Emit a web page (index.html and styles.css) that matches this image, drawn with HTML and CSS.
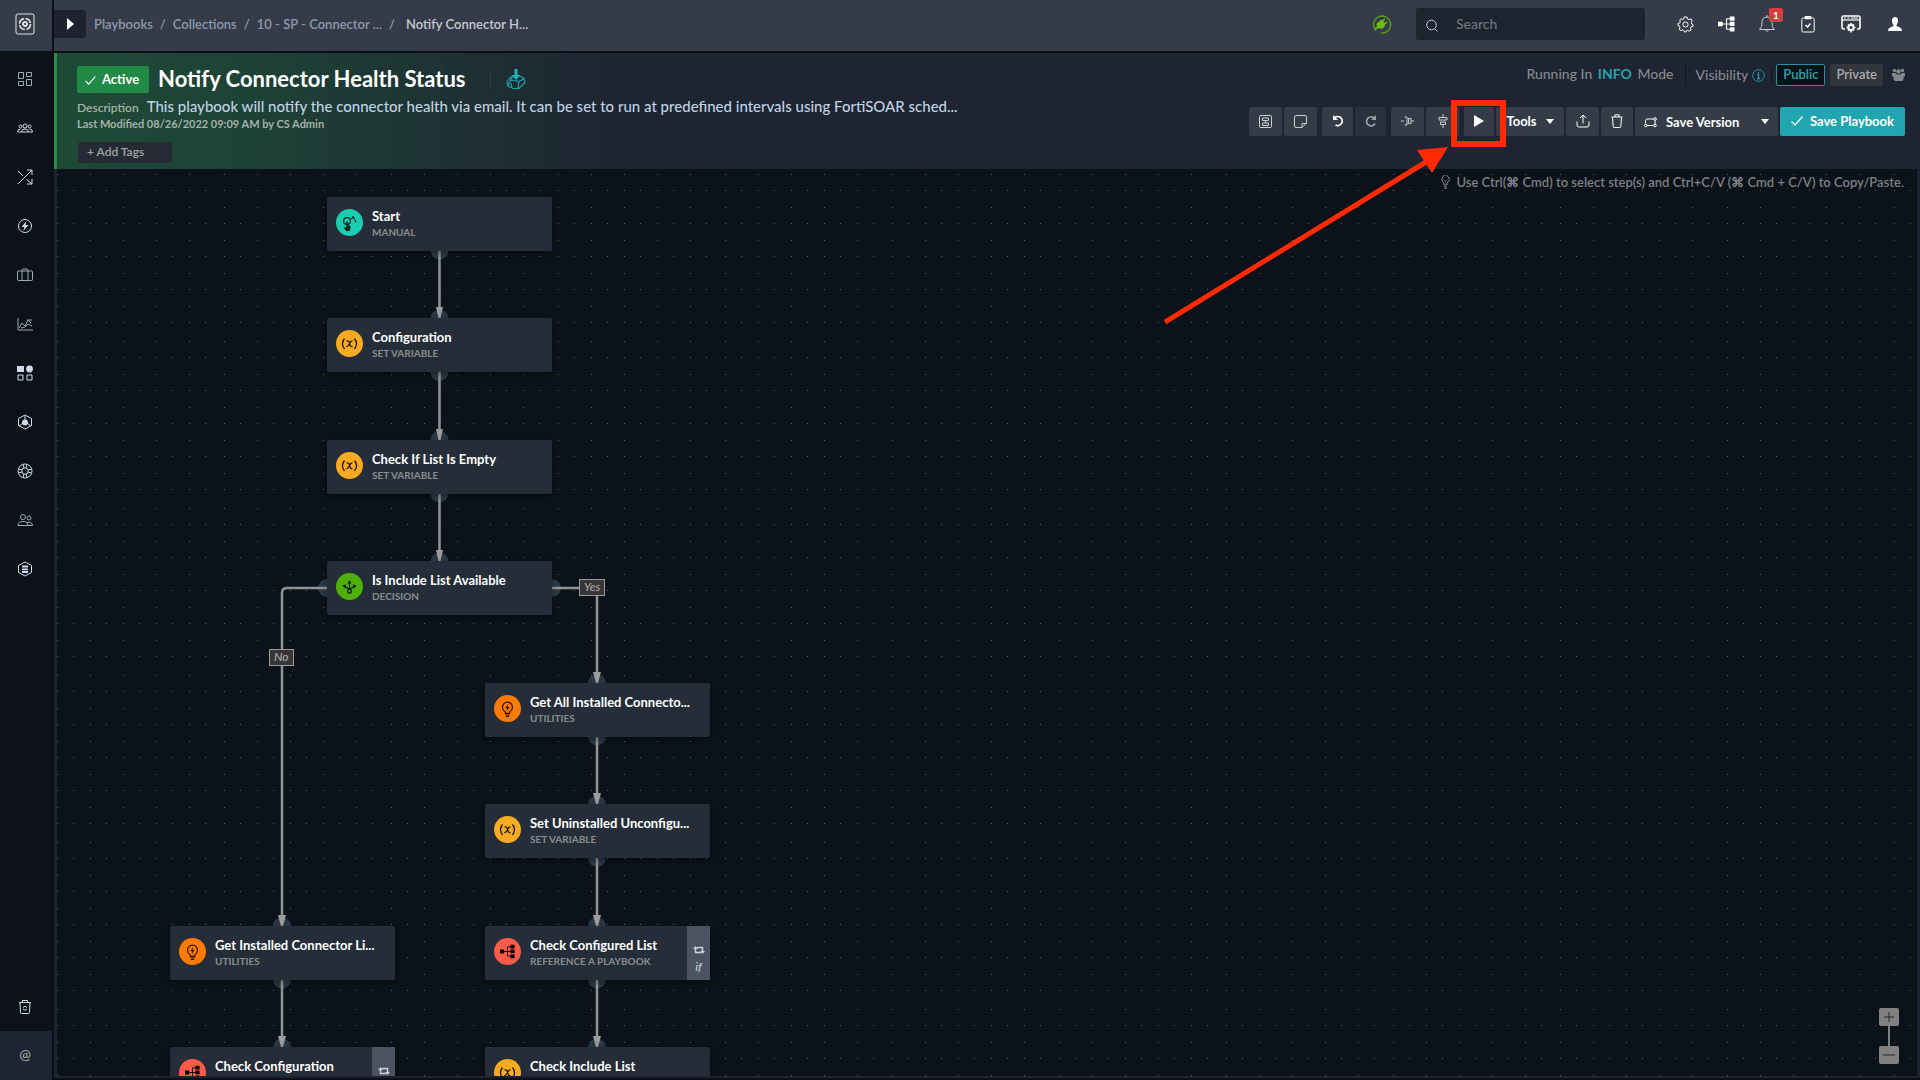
FILE: index.html
```html
<!DOCTYPE html>
<html lang="en">
<head>
<meta charset="utf-8">
<title>Notify Connector Health Status</title>
<link rel="stylesheet" href="styles.css">
</head>
<body>
<svg class="defs" aria-hidden="true">
  <symbol id="i-var" viewBox="0 0 27 27"><path d="M8.500 8.500q-4 5 0 10.500M18.500 8.500q4 5 0 10.500" fill="none" stroke="#1c1608" stroke-width="1.300"/><path d="M10.500 10.800h1.200q1 0 1.400 1.200l1 3.300q.4 1.300 1.400 1.300h1M16.500 10.800q-1.300-.2-2.300 1.500l-1.600 2.700q-1 1.800-2.300 1.600" fill="none" stroke="#1c1608" stroke-width="1.300"/></symbol>
  <symbol id="i-hand" viewBox="0 0 27 27"><circle cx="11" cy="12" r="3.400" fill="none" stroke="#06231d" stroke-width="1.200"/><path d="M10.300 12.500h1.500v3.600l2.700.6v2.600l-1 2.700h-3.300l-2.400-3.200 1-.8 1.500 1z" fill="#06231d"/><path d="M14.500 10.500l2-2M17.500 9l2.500 3.500" stroke="#06231d"/><circle cx="17" cy="8.500" r="1.200" fill="#06231d"/><circle cx="19.500" cy="12.600" r=".8" fill="#06231d"/></symbol>
  <symbol id="i-decision" viewBox="0 0 27 27"><path d="M13.500 9.500v7M9 13.500l4.500 3 4.500-3" fill="none" stroke="#071d00" stroke-width="1.200"/><path d="M11.500 10.500l2-3.500 2 3.500zM10.500 11.500l-4 .8 2.200 3.200zM16.500 11.500l4 .8-2.200 3.200z" fill="#071d00"/><circle cx="13.500" cy="18.300" r="1.900" fill="none" stroke="#071d00" stroke-width="1.200"/></symbol>
  <symbol id="i-bulb" viewBox="0 0 27 27"><path d="M11.300 18.300v-1.300q-2.800-1.900-2.800-4.800a5 5 0 0 1 10 0q0 2.900-2.800 4.800v1.300zM11.300 20h4.400M12 21.500h3" fill="none" stroke="#2a1200" stroke-width="1.200"/><path d="M14.200 9l-2.900 4.300h1.900l-.5 3 2.900-4.300h-1.900z" fill="#2a1200"/></symbol>
  <symbol id="i-tree" viewBox="0 0 18 16"><path d="M0 5.500h5v5H0zM12.500 0h5v4.500h-5zM12.500 5.700h5v4.500h-5zM12.500 11.500h5V16h-5z"/><path d="M5 8h8M9 2.500v11M9 2.500h4M9 13.500h4" fill="none" stroke="currentColor" stroke-width="1.200"/></symbol>
  <symbol id="i-loop" viewBox="0 0 12 10"><path d="M2.500 3v4.500H8M9.500 7V2.500H4" fill="none" stroke="currentColor" stroke-width="1.500"/><path d="M0 4l2.500-3L5 4zM7 6l2.500 3L12 6z" fill="currentColor"/></symbol>
  <symbol id="i-caret" viewBox="0 0 8 5"><path d="M0 0h8L4 5z"/></symbol>
  <symbol id="i-check" viewBox="0 0 12 10"><path d="M.5 5.500L4 9l7.500-8.500" fill="none" stroke="currentColor" stroke-width="1.200"/></symbol>
</svg>

<div class="app">
  <aside class="side">
    <a class="brand" href="#" aria-label="Home"><svg width="20" height="22" viewBox="0 0 20 22" class="line"><rect x="1" y="1" width="18" height="20" rx="2"/><circle cx="10" cy="11" r="5.500" stroke-width="1.600" stroke-dasharray="7 1.600"/><circle cx="10" cy="11" r="2" stroke-width="1.800"/></svg></a>
    <nav class="menu" aria-label="Main">
      <a href="#" aria-label="Dashboard"><svg class="line dim" width="16" height="16" viewBox="0 0 16 16"><path d="M1.500 1.500h5v6h-5zM9.500 1.500h5v4h-5zM1.500 10.500h5v4h-5zM9.500 8.500h5v6h-5z"/></svg></a>
      <a href="#" aria-label="Teams"><svg class="line" width="16" height="16" viewBox="0 0 16 16"><circle cx="8" cy="6" r="2"/><circle cx="3.500" cy="6.500" r="1.500"/><circle cx="12.500" cy="6.500" r="1.500"/><path d="M4.500 12q0-3 3.500-3t3.500 3zM4.500 12h-4q0-3 3-3M11.500 12h4q0-3-3-3"/></svg></a>
      <a href="#" aria-label="Automation"><svg class="line" width="16" height="16" viewBox="0 0 16 16"><path d="M1 15L15 1M10 1h5v5M1 2l5 5M9.500 10.500L15 15M15 10v5h-5"/></svg></a>
      <a href="#" aria-label="Incident response"><svg class="line" width="16" height="16" viewBox="0 0 16 16"><circle cx="8" cy="8" r="6.500"/><path d="M9.500 3L4.500 9h3l-1.200 4L11.500 7h-3z" fill="currentColor" stroke="none"/></svg></a>
      <a href="#" aria-label="Cases"><svg class="line dim" width="16" height="16" viewBox="0 0 16 16"><rect x=".5" y="4" width="15" height="9.500" rx="1"/><path d="M5 13.500V4q0-2 1-2h4q1 0 1 2v9.500"/></svg></a>
      <a href="#" aria-label="Reports"><svg class="line dim" width="16" height="16" viewBox="0 0 16 16"><path d="M1 2v12h15M2 12l3-5 3 3 3-6 3 3M4 12l4-1 3-3 4 2M10 4h5"/></svg></a>
      <a href="#" aria-label="Content hub"><svg class="line" width="16" height="16" viewBox="0 0 16 16"><path d="M0 1h7v6H0z" fill="currentColor" stroke="none"/><circle cx="12.500" cy="4" r="3.400" fill="currentColor" stroke="none"/><path d="M1 10h5v5H1zM10 10h5v5h-5z"/></svg></a>
      <a href="#" aria-label="Assets"><svg class="line" width="16" height="16" viewBox="0 0 16 16"><path d="M8 1l6.500 3.500v7L8 15l-6.500-3.500v-7zM8 2v6M2 12l4-3M14 12l-4-3"/><circle cx="8" cy="8.500" r="3" fill="currentColor" stroke="none"/></svg></a>
      <a href="#" aria-label="Help"><svg class="line" width="16" height="16" viewBox="0 0 16 16"><circle cx="8" cy="8" r="7"/><circle cx="8" cy="8" r="3.200"/><path d="M6 1.500L7 5M10 1.500L9 5M6 14.500L7 11M10 14.500L9 11M1.500 6L5 7M1.500 10L5 9M14.500 6L11 7M14.500 10L11 9"/></svg></a>
      <a href="#" aria-label="Users"><svg class="line dim" width="16" height="16" viewBox="0 0 16 16"><circle cx="6" cy="5" r="2.500"/><circle cx="12" cy="6" r="2"/><path d="M1 13.500q0-4 5-4t5 4zM9.500 10.500q5.500-1.500 6 3h-4.500"/></svg></a>
      <a href="#" aria-label="Data"><svg class="line" width="16" height="16" viewBox="0 0 16 16"><path d="M8 1l6.500 3.500v7L8 15l-6.500-3.500v-7z"/><path d="M5 5.500h6M5 8.300h6M5 11h6" stroke-width="1.800"/></svg></a>
    </nav>
    <a class="bin" href="#" aria-label="Recycle bin"><svg class="line" width="16" height="16" viewBox="0 0 16 16"><path d="M2 3.500h12M5.500 3V1.500h5V3M3 4l.5 9.500q0 1 1 1h7q1 0 1-1L13 4"/><path d="M6 8.500q2-2.500 4 0M10 10q-2 2.500-4 0"/></svg></a>
    <a class="at" href="#" aria-label="About">@</a>
  </aside>

  <header class="top">
    <button class="expand" aria-label="Expand"><svg width="7" height="12" viewBox="0 0 7 12"><path d="M0 0l7 6-7 6z"/></svg></button>
    <nav class="crumbs" aria-label="Breadcrumb"><a href="#">Playbooks</a><span>/</span><a href="#">Collections</a><span>/</span><a href="#">10 - SP - Connector ...</a><span>/</span><b>Notify Connector H...</b></nav>
    <div class="top-right">
      <svg class="plug" width="20" height="20" viewBox="0 0 20 20"><path d="M4 16.500a8.500 8.500 0 1 1 5 2.500M13 18.500a8.500 8.500 0 0 0 3-2" fill="none" stroke="#58a70c" stroke-width="1.300"/><path d="M5 9l2-1 2-2.500 1 1 2.500-2 .8.800-2 2.500 1.200 1.200 2.300-1.500.8.800-2.600 2.500q0 3-2.500 3.700-2.500.7-4-.5L3.500 16l-1-.8 2.500-2.700q-1-2 0-3.500z" fill="#6bbf0b"/></svg>
      <label class="search"><svg width="12" height="13" viewBox="0 0 12 13" class="line"><circle cx="5.500" cy="6" r="4.800"/><path d="M9 10l2.500 2.500"/></svg><input type="text" placeholder="Search" aria-label="Search"></label>
      <div class="tools">
        <button aria-label="Settings"><svg class="line" width="17" height="17" viewBox="0 0 17 17"><circle cx="8.500" cy="8.500" r="2.600"/><path d="M7 1h3l.5 2 1.600.7L14 2.800 15.200 5l-1 1.600.4 1.200L16 8.500v1.800l-1.900.5-.7 1.500.8 1.700-2 1.300-1.500-1-1.200.3L9 16H7.500l-.8-1.700-1.500-.5-1.600.9L2.200 13l.8-1.700-.5-1.300L1 9.500V7.500L2.700 7l.6-1.500L2.600 4 4 2.700l1.600.8L6.700 3z"/></svg></button>
        <button aria-label="Executions"><svg width="17" height="16" fill="currentColor"><use href="#i-tree"/></svg></button>
        <button class="bell" aria-label="Notifications"><svg class="line dim" width="16" height="18" viewBox="0 0 16 18"><path d="M.5 14.500q3-2.500 2.500-7Q3 2 8 2t5 5.500q-.5 4.500 2.500 7zM6.500 15q1.500 3 3 0M8 0v2"/></svg><span class="badge">1</span></button>
        <button aria-label="Tasks"><svg class="line" width="14" height="17" viewBox="0 0 14 17"><rect x=".8" y="2" width="12.400" height="14" rx="1.500"/><path d="M4.500 2.500V.7h5v1.800zM4.500 9l2 2 3-3.500" stroke-width="1.500"/></svg></button>
        <button class="apps" aria-label="Applications"><svg class="line" width="20" height="18" viewBox="0 0 20 18"><path d="M4 14H2.500Q1 14 1 12.500V2.500Q1 1 2.500 1h15Q19 1 19 2.500v10q0 1.500-1.500 1.500H16" stroke-width="1.600"/><path d="M1 5h18" stroke-width="1.200"/><path d="M3 3h2M6.500 3h2M10 3h7" stroke-width="1.200"/><circle cx="10" cy="12.500" r="2.600" stroke-width="2"/><path d="M10 8v2M10 15v2.500M5.500 12.500H8M12 12.500h2.500M7 9.500l1 1M13 9.500l-1 1M7 15.500l1-1M13 15.500l-1-1" stroke-width="1.700"/></svg></button>
        <button class="user" aria-label="Profile"><svg width="14" height="14" viewBox="0 0 14 14" fill="currentColor"><path d="M7 0c2 0 3 1.500 3 3.500S9 7.500 8.600 8v1.200q5.400 1 5.400 4.800H0q0-3.800 5.400-4.800V8C5 7.500 4 5.500 4 3.500S5 0 7 0z"/></svg></button>
      </div>
    </div>
  </header>

  <main class="work">
    <section class="head">
      <div class="info">
        <div class="title-row">
          <button class="active"><svg width="11" height="9"><use href="#i-check"/></svg>Active</button>
          <h1>Notify Connector Health Status</h1>
          <a class="install" href="#" aria-label="Solution pack"><svg width="20" height="21" viewBox="0 0 20 21"><path d="M8 8H4.500L1 13l1 4 5 2.500h6l6-6-1-4L13.500 7H12M2 16.500L5 11l8 1.500M5 11l1-3M13 12.500L12 19M13 12.500l5.500-3M5 14l1 5" fill="none" stroke="#21a0ab" stroke-width="1.200"/><path d="M8.500 0h3v6h3L10 11 5.500 6h3z" fill="#21b0bc"/></svg></a>
        </div>
        <p class="desc"><span>Description</span>This playbook will notify the connector health via email. It can be set to run at predefined intervals using FortiSOAR sched...</p>
        <p class="modified">Last Modified 08/26/2022 09:09 AM by CS Admin</p>
        <input class="tags" type="text" placeholder="+ Add Tags" aria-label="Add tags">
      </div>
      <div class="controls">
        <div class="mode">
          <span class="running">Running In <a href="#">INFO</a> Mode</span>
          <span class="vis">Visibility <svg width="13" height="13" viewBox="0 0 13 13"><circle cx="6.500" cy="6.500" r="5.800" fill="none" stroke="#2496a0"/><path d="M6.500 3v1.400M5 5.700h1.600v4M5 9.700h3.200" fill="none" stroke="#2ab0bb" stroke-width="1.100"/></svg></span>
          <div class="seg"><button class="public">Public</button><button class="private">Private</button></div>
          <svg class="group" width="13" height="13" viewBox="0 0 13 13" fill="#85888e"><circle cx="2.500" cy="2.500" r="1.700"/><circle cx="10.500" cy="2.500" r="1.700"/><circle cx="6.500" cy="3.500" r="2.200"/><path d="M0 5h3.500l1 1.500h4L9.500 5H13v3.500h-1.500V11q0 2-2 2h-6q-2 0-2-2V8.500H0z"/></svg>
        </div>
        <div class="bar">
          <div class="set"><button class="b33" aria-label="Save as block"><svg class="line dim" width="13" height="13" viewBox="0 0 13 13"><rect x=".5" y=".5" width="12" height="12" rx="1"/><path d="M3.500 3h6v2.500h-6zM6.500 5.500V8M3.500 8h6v2.500h-6z"/></svg></button><button class="b33" aria-label="Add note"><svg class="line dim" width="13" height="13" viewBox="0 0 13 13"><path d="M12.500 8V2q0-1.500-1.500-1.500H2Q.5.500.5 2v9q0 1.500 1.500 1.500h6zM8 12.500V8.500h4.500"/></svg></button></div>
          <div class="set"><button class="b31" aria-label="Undo"><svg width="12" height="12" viewBox="0 0 12 12"><path d="M2 3.500A4.500 4.500 0 1 1 3.500 10" fill="none" stroke="#fff" stroke-width="1.800"/><path d="M1 0v5h5z" fill="#fff"/></svg></button><button class="b31 faint" aria-label="Redo"><svg width="12" height="12" viewBox="0 0 12 12"><path d="M9.500 3.500A4.500 4.500 0 1 0 10 8.500" fill="none" stroke="#9a9da3" stroke-width="1.800"/><path d="M11 0v5H6z" fill="#9a9da3"/></svg></button></div>
          <div class="set"><button class="b33" aria-label="Align horizontally"><svg class="line dim" width="13" height="10" viewBox="0 0 13 10"><path d="M0 5h3M10 5h3M3.500 1H6v8H3.500M7.500 2.500H10v5H7.500z"/></svg></button><button class="b33" aria-label="Align vertically"><svg class="line dim" width="10" height="14" viewBox="0 0 10 14"><path d="M5 0v3M5 11v3M1 6V3.500h8V6zM2.500 8h5v2.500h-5z"/></svg></button></div>
          <div class="set"><div class="target"><button class="b30" aria-label="Run playbook"><svg width="10" height="12" viewBox="0 0 10 12"><path d="M0 0l10 6-10 6z" fill="#fff"/></svg></button>
            <span class="callout"></span>
            <svg class="pointer" width="290" height="180" viewBox="0 0 290 180"><path d="M1 176L262 16" stroke="#ff2a04" stroke-width="5"/><path d="M284 1L253 4l15 23z" fill="#ff2a04"/></svg></div><button class="b68">Tools<svg width="8" height="5"><use href="#i-caret"/></svg></button><button class="b33" aria-label="Export"><svg class="line" width="14" height="14" viewBox="0 0 14 14"><path d="M1 7.500V11q0 2 2 2h8q2 0 2-2V7.500M7 9.500V1M4 4l3-3 3 3"/></svg></button><button class="b32" aria-label="Delete"><svg class="line" width="12" height="14" viewBox="0 0 12 14"><path d="M.5 3h11M4 3V.8h4V3M1.500 3.500l.7 9q0 1 1 1h5.600q1 0 1-1l.7-9"/></svg></button><div class="split"><button><svg class="line" width="13" height="12" viewBox="0 0 13 12"><circle cx="1.800" cy="9.500" r="1.300"/><circle cx="11" cy="9.500" r="1.300"/><circle cx="11" cy="3" r="1.300"/><path d="M3 9.500h6.700M1.500 7.500V5q0-2 2-2h6M11 4.500v3.500"/></svg>Save Version</button><button aria-label="More save options"><svg width="8" height="5"><use href="#i-caret"/></svg></button></div><button class="save"><svg width="12" height="10"><use href="#i-check"/></svg>Save Playbook</button></div>
        </div>
      </div>
    </section>

    <section class="canvas" aria-label="Playbook designer">
      <svg class="grid" aria-hidden="true"><defs><pattern id="dots" width="167" height="167" patternUnits="userSpaceOnUse" x="0" y="5"><path fill="#59606a" d="M0 0h1v1H0zM33 0h1v1h-1zM66 0h1v1h-1zM99 0h1v1h-1zM132 0h1v1h-1zM0 33h1v1H0zM33 33h1v1h-1zM66 33h1v1h-1zM99 33h1v1h-1zM132 33h1v1h-1zM0 66h1v1H0zM33 66h1v1h-1zM66 66h1v1h-1zM99 66h1v1h-1zM132 66h1v1h-1zM0 99h1v1H0zM33 99h1v1h-1zM66 99h1v1h-1zM99 99h1v1h-1zM132 99h1v1h-1zM0 132h1v1H0zM33 132h1v1h-1zM66 132h1v1h-1zM99 132h1v1h-1zM132 132h1v1h-1z"/><g fill="none" stroke="#59606a"><path id="dr" d="M0 16.500h167" stroke-dasharray="1 15 1 16 1 15 1 16 1 15 1 16 1 15 1 16 1 15 1 18"/><use href="#dr" y="33"/><use href="#dr" y="66"/><use href="#dr" y="99"/><use href="#dr" y="132"/></g></pattern></defs><rect width="100%" height="100%" fill="url(#dots)"/></svg>

      <svg class="edges" width="700" height="910" viewBox="57 169 700 910" aria-hidden="true">
        <g fill="#2a3844">
          <circle cx="439.500" cy="250.500" r="9"/><circle cx="439.500" cy="318.500" r="9"/><circle cx="439.500" cy="372" r="9"/><circle cx="439.500" cy="440" r="9"/><circle cx="439.500" cy="493.500" r="9"/><circle cx="439.500" cy="561.500" r="9"/>
          <circle cx="327" cy="588" r="9"/><circle cx="552" cy="588" r="9"/>
          <circle cx="597" cy="683" r="9"/><circle cx="597" cy="736.500" r="9"/><circle cx="597" cy="804.500" r="9"/><circle cx="597" cy="858" r="9"/><circle cx="597" cy="926" r="9"/><circle cx="597" cy="979.500" r="9"/><circle cx="597" cy="1047.500" r="9"/>
          <circle cx="282" cy="926" r="9"/><circle cx="282" cy="979.500" r="9"/><circle cx="282" cy="1047.500" r="9"/>
        </g>
        <g fill="none" stroke="#929292" stroke-width="2.500">
          <path d="M439.500 251v57M439.500 372v58M439.500 494v57M327 588h-40q-5 0-5 5v323M552 588h41q4 0 4 4v81M597 737v57M597 858v58M597 980v57M282 980v57"/>
        </g>
        <g fill="#9c9c9c">
          <path d="M436 307h7l-2.500 11h-2zM436 429h7l-2.500 11h-2zM436 550h7l-2.500 11h-2zM593 672h8l-3 11h-2zM593 793h8l-3 11h-2zM593 915h8l-3 11h-2zM593 1036h8l-3 11h-2zM278 915h8l-3 11h-2zM278 1036h8l-3 11h-2z"/>
        </g>
      </svg>

      <article class="node start"><svg class="ic teal"><use href="#i-hand"/></svg><div><h2>Start</h2><p>MANUAL</p></div></article>
      <article class="node config"><svg class="ic amber"><use href="#i-var"/></svg><div><h2>Configuration</h2><p>SET VARIABLE</p></div></article>
      <article class="node empty"><svg class="ic amber"><use href="#i-var"/></svg><div><h2>Check If List Is Empty</h2><p>SET VARIABLE</p></div></article>
      <article class="node avail"><svg class="ic green"><use href="#i-decision"/></svg><div><h2>Is Include List Available</h2><p>DECISION</p></div></article>
      <article class="node getall"><svg class="ic orange"><use href="#i-bulb"/></svg><div><h2>Get All Installed Connecto...</h2><p>UTILITIES</p></div></article>
      <article class="node uninst"><svg class="ic amber"><use href="#i-var"/></svg><div><h2>Set Uninstalled Unconfigu...</h2><p>SET VARIABLE</p></div></article>
      <article class="node checked"><svg class="ic coral"><use href="#i-tree" x="6" y="6" width="15" height="15"/></svg><div><h2>Check Configured List</h2><p>REFERENCE A PLAYBOOK</p></div><aside><svg width="12" height="10"><use href="#i-loop"/></svg><i>if</i></aside></article>
      <article class="node include"><svg class="ic amber"><use href="#i-var"/></svg><div><h2>Check Include List</h2></div></article>
      <article class="node getinst"><svg class="ic orange"><use href="#i-bulb"/></svg><div><h2>Get Installed Connector Li...</h2><p>UTILITIES</p></div></article>
      <article class="node checkconf"><svg class="ic coral"><use href="#i-tree" x="6" y="6" width="15" height="15"/></svg><div><h2>Check Configuration</h2></div><aside><svg width="12" height="10"><use href="#i-loop"/></svg></aside></article>
      <span class="tag yes">Yes</span>
      <span class="tag no">No</span>

      <p class="hint"><svg width="9" height="14" viewBox="0 0 9 14"><path d="M3 10Q3 8 1.500 6.500T2 1.500t5 0 .5 5T6 10zM3 12h3M3.500 13.500h2M3.500 5.500l1 1 1-1" fill="none" stroke="#8b8e92"/></svg>Use Ctrl(⌘ Cmd) to select step(s) and Ctrl+C/V (⌘ Cmd + C/V) to Copy/Paste.</p>

      <div class="zoom"><button aria-label="Zoom in"><svg width="12" height="12" viewBox="0 0 12 12"><path d="M6 1v10M1 6h10"/></svg></button><span></span><button aria-label="Zoom out"><svg width="12" height="12" viewBox="0 0 12 12"><path d="M0 6h12"/></svg></button></div>
    </section>
  </main>
</div>
</body>
</html>
```
FILE: styles.css
```css
* { box-sizing: border-box; margin: 0; }

body {
  background: #0c1016;
  color: #fff;
  font: 500 13px/16px Lato, "Noto Sans", sans-serif;
}

button, input { font: inherit; color: inherit; border: 0; padding: 0; background: none; }
a { color: inherit; text-decoration: none; }
svg { display: block; flex: none; }
.defs { position: absolute; width: 0; height: 0; }
.line { fill: none; stroke: currentColor; stroke-width: 1; }
.dim { opacity: .75; }

.app {
  display: grid;
  grid-template: 51px minmax(0, 1fr) / 52px minmax(0, 1fr);
  gap: 2px;
  height: 100vh;
}

/* side rail */
.side {
  grid-row: 1 / 3;
  display: flex;
  flex-direction: column;
  background: #0d1118;
  color: #cfdcec;
}
.side a { display: grid; place-items: center; height: 49px; padding-right: 2px; }
.side .brand { height: 51px; background: #353b48; color: #e4e6ea; padding-bottom: 3px; }
.menu { padding-top: 3px; margin-bottom: auto; }
.side .at { background: #1e2431; color: #a2a5aa; font-size: 14px; padding-bottom: 3px; }

/* top bar */
.top { display: flex; align-items: center; background: #353b48; padding-bottom: 3px; }
.expand { display: grid; place-items: center; width: 32px; height: 28px; background: #1d222e; border-radius: 0 3px 3px 0; fill: #fff; }
.crumbs { display: flex; gap: 7px; padding: 0 0 1px 8px; color: #8c99ab; font-size: 13px; font-weight: 600; }
.crumbs b { color: #c5c8cd; font-weight: 600; padding-left: 4px; }
.top-right { display: flex; align-items: center; margin-left: auto; padding-right: 13px; }
.search { display: flex; align-items: center; gap: 18px; width: 229px; height: 32px; margin: 0 28px 0 24px; padding: 0 10px; background: #1d232f; border-radius: 3px; color: #c9ccd1; }
.search svg { margin-top: 2px; }
.search input { flex: 1; min-width: 0; font-size: 14px; }
.search input::placeholder { color: #717680; opacity: 1; }
.tools { display: flex; gap: 17px; }
.tools button { display: grid; place-items: center; width: 24px; height: 24px; }
.tools .apps { margin-left: 2px; }
.tools .user { margin-left: 3px; }
.bell { position: relative; }
.badge { position: absolute; top: -4px; right: -4px; width: 14px; height: 14px; background: #dc3a3f; border-radius: 2px; font: 700 10px/14px Lato, sans-serif; }

/* playbook header */
.work { display: flex; flex-direction: column; min-height: 0; padding-bottom: 2px; }
.head {
  display: flex;
  justify-content: space-between;
  height: 116px;
  border-left: 3px solid #21904a;
  background: linear-gradient(90deg, #1e4a36 0, #1d4336 180px, #1e2431 560px);
}
.info { padding: 13px 0 0 20px; }
.title-row { display: flex; align-items: center; height: 27px; }
.active { display: flex; align-items: center; gap: 6px; height: 27px; padding: 0 10px 2px 8px; background: #228a47; border-radius: 2px; font-weight: 700; }
.active svg { margin-top: 4px; }
h1 { margin-left: 9px; padding-bottom: 2px; font-size: 22px; line-height: 25px; font-weight: 700; }
.install { margin-left: 24px; padding-left: 15px; border-left: 1px solid #2f3a42; }
.desc { display: flex; align-items: baseline; gap: 8px; height: 20px; margin-top: 3px; line-height: 20px; font-size: 15px; color: #c0d2e4; }
.desc span { font-size: 12px; font-weight: 600; color: #a8b2ac; }
.modified { height: 16px; font-size: 11px; font-weight: 700; color: #a5b1aa; }
.tags { display: block; width: 94px; height: 21px; margin: 10px 0 0 1px; padding: 0 9px 3px; background: #262a34; border-radius: 3px; font-size: 12px; font-weight: 600; }
.tags::placeholder { color: #a0a3a8; opacity: 1; }

.controls { display: flex; flex-direction: column; align-items: flex-end; gap: 22px; padding: 11px 15px 0 0; }
.mode { display: flex; align-items: center; height: 21px; color: #85888e; font-size: 14px; }
.running { padding-right: 11px; border-right: 1px solid #12161d; line-height: 19px; padding-bottom: 2px; word-spacing: normal; }
.running a { color: #26a3ad; font-weight: 700; padding: 0 2px; }
.vis { display: flex; align-items: center; gap: 4px; padding: 0 6px 0 10px; border-right: 1px solid #12161d; }
.vis svg { margin-top: 2px; }
.seg { display: flex; gap: 5px; padding: 0 9px 0 4px; }
.seg button { height: 22px; font-size: 13px; font-weight: 600; border-radius: 2px; padding: 0 6px 2px; }
.public { background: #0c1116; border: 1px solid #23929c; color: #2aa3ad; }
.private { background: #33363c; color: #a9abae; }
.bar, .set { display: flex; }
.bar { gap: 5px; font-weight: 700; }
.set { gap: 2px; }
.bar button { display: flex; align-items: center; justify-content: center; height: 29px; padding-bottom: 1px; background: #353c48; border-radius: 2px; }
.bar .faint { background: #2a303c; }
.b33 { width: 33px; }
.b32 { width: 32px; }
.b31 { width: 31px; }
.b30 { width: 30px; }
.b68 { width: 68px; gap: 9px; }
.bar use[href="#i-caret"] { fill: #fff; }
.split { display: flex; width: 143px; justify-content: space-between; background: #353c48; border-radius: 2px; }
.split button { gap: 9px; padding: 0 9px; }
.bar .save { width: 125px; gap: 7px; background: #21a5b0; }
.target { position: relative; }
.callout { position: absolute; top: -7px; left: -13px; width: 55px; height: 47px; border: 6px solid #ff2a04; z-index: 2; }
.pointer { position: absolute; top: 39px; left: -300px; z-index: 2; }

/* designer */
.canvas {
  position: relative;
  flex: 1;
  min-height: 0;
  overflow: hidden;
  border: solid #1c2230;
  border-width: 0 3px 2px;
  background: #0b1219;
}
.grid { position: absolute; width: 100%; height: 100%; }
.edges { position: absolute; top: 0; left: 0; }
.node {
  position: absolute;
  display: flex;
  gap: 9px;
  width: 225px;
  height: 54px;
  padding: 11px 0 0 9px;
  background: #252d38;
  border-radius: 2px;
  box-shadow: 0 2px 5px #0006;
}
.ic { width: 27px; height: 27px; margin-top: 1px; border-radius: 50%; }
.teal { background: #1bcdb0; }
.amber { background: #f8ab20; }
.green { background: #4fb00a; }
.orange { background: #fd7a05; }
.coral { background: #fa5b48; color: #160603; }
.node h2 { font-size: 13px; line-height: 16px; font-weight: 700; white-space: nowrap; }
.node p { font-size: 10px; line-height: 16px; font-weight: 700; color: #8a8d90; }
.node aside { position: absolute; inset: 0 0 0 auto; display: flex; flex-direction: column; align-items: center; gap: 5px; width: 23px; padding-top: 19px; background: #4a535f; color: #c9d3de; }
.node aside i { font-size: 12px; line-height: 14px; }
.start { left: 270px; top: 28px; }
.config { left: 270px; top: 149px; }
.empty { left: 270px; top: 271px; }
.avail { left: 270px; top: 392px; }
.getall { left: 428px; top: 514px; }
.uninst { left: 428px; top: 635px; }
.checked { left: 428px; top: 757px; }
.include { left: 428px; top: 878px; }
.getinst { left: 113px; top: 757px; }
.checkconf { left: 113px; top: 878px; }
.tag { position: absolute; height: 17px; padding: 0 4px; border: 1px solid #9a9ca4; background: #3a3636; color: #b0b2b6; font: italic 12px/14px Lato, sans-serif; }
.yes { left: 522px; top: 410px; }
.no { left: 212px; top: 480px; }
.hint { position: absolute; top: 5px; right: 13px; display: flex; align-items: center; gap: 6px; color: #7d8084; font-size: 13px; font-weight: 600; }
.zoom { position: absolute; right: 18px; bottom: 12px; display: flex; flex-direction: column; align-items: center; }
.zoom button { display: grid; place-items: center; width: 20px; height: 18px; background: #808080; border-radius: 2px; stroke: #23282e; }
.zoom span { width: 2px; height: 20px; background: #808080; }
```
